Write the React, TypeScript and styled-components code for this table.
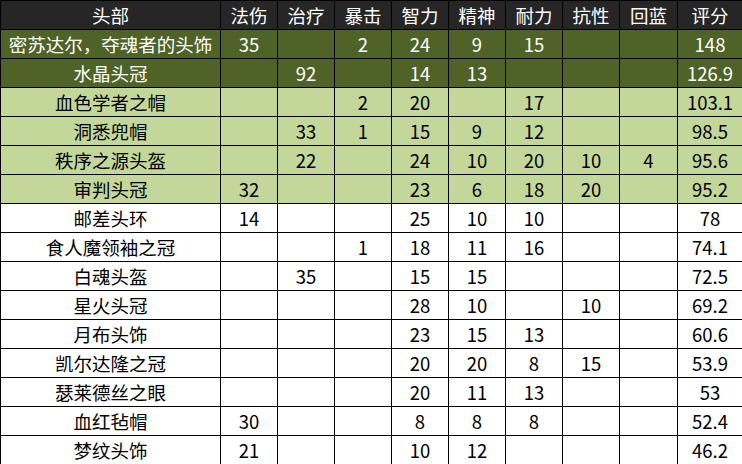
import styled, { createGlobalStyle } from "styled-components";

const GlobalStyle = createGlobalStyle`
  html, body {
    margin: 0;
    padding: 0;
    background: #ffffff;
    overflow: hidden;
  }
`;

type Tone = "head" | "dark" | "light" | "plain";

const toneBg: Record<Tone, string> = {
  head: "#262626",
  dark: "#4f6228",
  light: "#c4d79b",
  plain: "#ffffff",
};

const toneFg: Record<Tone, string> = {
  head: "#ffffff",
  dark: "#ffffff",
  light: "#000000",
  plain: "#000000",
};

const Sheet = styled.table`
  border-collapse: collapse;
  table-layout: fixed;
  width: 742px;
  font-family: "Noto Sans CJK SC", "Liberation Sans", sans-serif;
  font-size: 18.5px;
`;

const Col = styled.col<{ $w: number }>`
  width: ${(p) => p.$w}px;
`;

const Row = styled.tr<{ $tone: Tone }>`
  height: 29px;
  background: ${(p) => toneBg[p.$tone]};
  color: ${(p) => toneFg[p.$tone]};
`;

const Cell = styled.td`
  border: 1px solid #000000;
  padding: 0;
  height: 28px;
  line-height: 28px;
  text-align: center;
  white-space: nowrap;
  overflow: hidden;
`;

const HeadCell = styled(Cell).attrs({ as: "th" })`
  font-weight: 400;
`;

const widths = [220, 57, 57, 57, 57, 57, 57, 57, 58, 65];

const header = ["头部", "法伤", "治疗", "暴击", "智力", "精神", "耐力", "抗性", "回蓝", "评分"];

const rows: { tone: Tone; cells: string[] }[] = [
  { tone: "dark", cells: ["密苏达尔，夺魂者的头饰", "35", "", "2", "24", "9", "15", "", "", "148"] },
  { tone: "dark", cells: ["水晶头冠", "", "92", "", "14", "13", "", "", "", "126.9"] },
  { tone: "light", cells: ["血色学者之帽", "", "", "2", "20", "", "17", "", "", "103.1"] },
  { tone: "light", cells: ["洞悉兜帽", "", "33", "1", "15", "9", "12", "", "", "98.5"] },
  { tone: "light", cells: ["秩序之源头盔", "", "22", "", "24", "10", "20", "10", "4", "95.6"] },
  { tone: "light", cells: ["审判头冠", "32", "", "", "23", "6", "18", "20", "", "95.2"] },
  { tone: "plain", cells: ["邮差头环", "14", "", "", "25", "10", "10", "", "", "78"] },
  { tone: "plain", cells: ["食人魔领袖之冠", "", "", "1", "18", "11", "16", "", "", "74.1"] },
  { tone: "plain", cells: ["白魂头盔", "", "35", "", "15", "15", "", "", "", "72.5"] },
  { tone: "plain", cells: ["星火头冠", "", "", "", "28", "10", "", "10", "", "69.2"] },
  { tone: "plain", cells: ["月布头饰", "", "", "", "23", "15", "13", "", "", "60.6"] },
  { tone: "plain", cells: ["凯尔达隆之冠", "", "", "", "20", "20", "8", "15", "", "53.9"] },
  { tone: "plain", cells: ["瑟莱德丝之眼", "", "", "", "20", "11", "13", "", "", "53"] },
  { tone: "plain", cells: ["血红毡帽", "30", "", "", "8", "8", "8", "", "", "52.4"] },
  { tone: "plain", cells: ["梦纹头饰", "21", "", "", "10", "12", "", "", "", "46.2"] },
];

function App() {
  return (
    <>
      <GlobalStyle />
      <Sheet>
        <colgroup>
          {widths.map((w, i) => (
            <Col key={i} $w={w} />
          ))}
        </colgroup>
        <thead>
          <Row $tone="head">
            {header.map((h) => (
              <HeadCell key={h}>{h}</HeadCell>
            ))}
          </Row>
        </thead>
        <tbody>
          {rows.map((r) => (
            <Row $tone={r.tone} key={r.cells[0]}>
              {r.cells.map((c, i) => (
                <Cell key={i}>{c}</Cell>
              ))}
            </Row>
          ))}
        </tbody>
      </Sheet>
    </>
  );
}

export default App;
